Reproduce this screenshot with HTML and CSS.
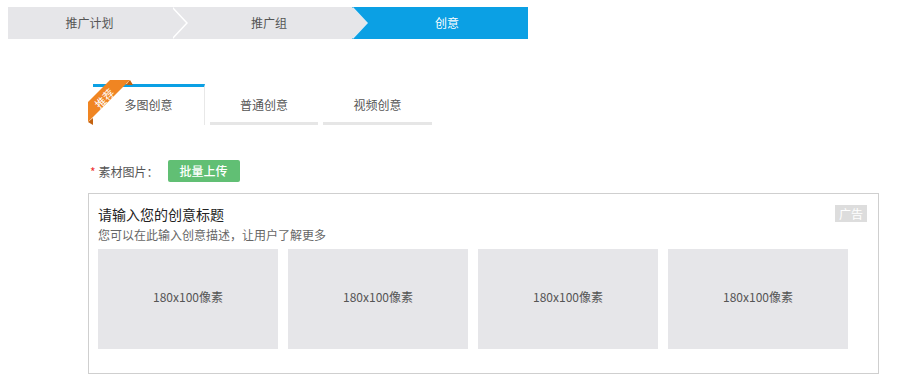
FILE: index.html
```html
<!DOCTYPE html>
<html lang="zh-CN">
<head>
<meta charset="utf-8">
<title>创意</title>
<link rel="stylesheet" href="styles.css">
</head>
<body>
<div class="steps">
  <div class="step step-1">推广计划</div>
  <div class="step step-2">推广组</div>
  <div class="step step-3 active">创意</div>
</div>

<div class="main">
  <div class="tabs">
    <div class="tab active">
      <svg class="ribbon" width="46" height="50" viewBox="0 0 46 50">
        <polygon points="7,40 2,44 7,47" fill="#c3620f"/>
        <polygon points="40,7 44,2 47,7" fill="#c3620f"/>
        <polygon points="2,24 24,2 44,2 2,44" fill="#f08522"/>
        <text x="0" y="0" transform="translate(19.5 21.5) rotate(-45)" text-anchor="middle" dominant-baseline="middle" class="ribbon-text">推荐</text>
      </svg>
      多图创意
    </div>
    <div class="tab">普通创意</div>
    <div class="tab">视频创意</div>
  </div>

  <div class="form-row">
    <span class="req">*</span><span class="label">素材图片：</span>
    <button class="btn-upload">批量上传</button>
  </div>

  <div class="preview">
    <span class="ad-badge">广告</span>
    <div class="preview-title">请输入您的创意标题</div>
    <div class="preview-desc">您可以在此输入创意描述，让用户了解更多</div>
    <div class="images">
      <div class="img-box">180x100像素</div>
      <div class="img-box">180x100像素</div>
      <div class="img-box">180x100像素</div>
      <div class="img-box">180x100像素</div>
    </div>
  </div>
</div>
</body>
</html>
```

FILE: styles.css
```css
* { box-sizing: border-box; }
body {
  margin: 0;
  background: #fff;
  font-family: "Noto Sans CJK SC", "Microsoft YaHei", sans-serif;
  font-size: 12px;
  color: #555;
}

.steps {
  display: flex;
  width: 520px;
  height: 32px;
  margin: 7px 0 0 8px;
}
.step {
  position: relative;
  height: 32px;
  line-height: 32px;
  text-align: center;
  background: #e6e6e9;
  color: #555;
}
.step-1 { width: 163px; }
.step-2 { width: 181px; padding-left: 15px; }
.step-3 { width: 176px; padding-left: 14px; }
.step.active { background: #0ba0e4; color: #fff; }

.step-1::before,
.step-2::before,
.step-1::after,
.step-2::after {
  content: "";
  position: absolute;
  top: 0;
  width: 0;
  height: 0;
  border-top: 16px solid transparent;
  border-bottom: 16px solid transparent;
  border-left: 15px solid #e6e6e9;
}
.step-1::before,
.step-2::before {
  right: -17px;
  border-left-color: #fff;
  z-index: 1;
}
.step-1::after,
.step-2::after {
  right: -15px;
  z-index: 2;
}
.step-2::before { border-left-color: #d9eef9; right: -16px; }

.main {
  padding-left: 88px;
}

.tabs {
  display: flex;
  gap: 5px;
  margin: 45px 0 0 5px;
}
.tab {
  position: relative;
  width: 108px;
  height: 41px;
  line-height: 41px;
  text-align: center;
  color: #555;
  font-size: 12px;
  border-bottom: 3px solid #e6e6e6;
}
.tab:nth-child(3) { width: 109px; }
.tab.active {
  width: 112px;
  border-bottom: none;
  border-top: 3px solid #0ba0e4;
  border-right: 1px solid #e8e8e8;
  line-height: 36px;
}
.ribbon {
  position: absolute;
  left: -7px;
  top: -9px;
  overflow: visible;
}
.ribbon-text {
  fill: #fff;
  font-size: 11px;
  font-family: "Noto Sans CJK SC", sans-serif;
}

.form-row {
  display: flex;
  align-items: center;
  height: 22px;
  margin-top: 35px;
  padding-left: 2px;
}
.req { color: #e33; margin-right: 3px; }
.label { color: #555; margin-right: 9px; }
.btn-upload {
  width: 72px;
  height: 22px;
  padding: 0;
  border: none;
  border-radius: 2px;
  background: #61bf74;
  color: #fff;
  font-family: inherit;
  font-size: 12px;
  font-weight: 500;
  line-height: 22px;
}

.preview {
  position: relative;
  width: 791px;
  margin-top: 11px;
  border: 1px solid #cfcfcf;
  padding: 10px 9px 24px;
}
.ad-badge {
  position: absolute;
  right: 11px;
  top: 11px;
  width: 32px;
  height: 17px;
  line-height: 17px;
  text-align: center;
  background: #ddd;
  color: #fff;
  font-size: 12px;
}
.preview-title {
  font-size: 14px;
  line-height: 20px;
  color: #222;
}
.preview-desc {
  font-size: 12px;
  line-height: 20px;
  margin-top: 1px;
  color: #666;
}
.images {
  display: flex;
  gap: 10px;
  margin-top: 4px;
}
.img-box {
  width: 180px;
  height: 100px;
  padding-bottom: 5px;
  background: #e6e6e9;
  color: #555;
  font-size: 12px;
  display: flex;
  align-items: center;
  justify-content: center;
}
```
